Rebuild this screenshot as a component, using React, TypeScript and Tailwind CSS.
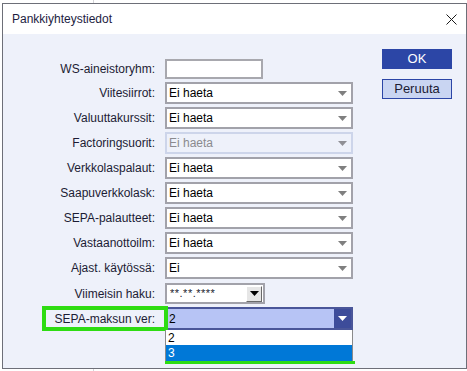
// pankkiyhteystiedot dialog
const font = { fontFamily: '"Liberation Sans", Arial, sans-serif' };

function Arrow({ color = "#7f7f7f" }: { color?: string }) {
  return (
    <svg width="9" height="5" viewBox="0 0 9 5">
      <polygon points="0,0 9,0 4.5,5" fill={color} />
    </svg>
  );
}

function Label({ text }: { text: string }) {
  return <div className="w-[152px] shrink-0 text-right text-[12px] text-[#1c1c34] leading-none">{text}</div>;
}

function Select({ value, disabled = false }: { value: string; disabled?: boolean }) {
  return (
    <div
      className={`${
        disabled ? "border-[#cdd5ea] bg-[#eef1fa] text-[#8a8a8e]" : "border-[#a2a2aa] bg-white text-black"
      } ml-[10px] w-[188px] h-[22px] border-2 flex items-center justify-between pl-[2px] pr-[4px] text-[12px]`}
    >
      <span>{value}</span>
      <Arrow color={disabled ? "#8f8f95" : "#7f7f7f"} />
    </div>
  );
}

function Row({ label, children, className = "" }: { label: string; children: React.ReactNode; className?: string }) {
  return (
    <div className={`flex items-center relative ${className}`}>
      <Label text={label} />
      {children}
    </div>
  );
}

export default function App() {
  const rows = [
    { label: "Viitesiirrot:", value: "Ei haeta" },
    { label: "Valuuttakurssit:", value: "Ei haeta" },
    { label: "Factoringsuorit:", value: "Ei haeta", disabled: true },
    { label: "Verkkolaspalaut:", value: "Ei haeta" },
    { label: "Saapuverkkolask:", value: "Ei haeta" },
    { label: "SEPA-palautteet:", value: "Ei haeta" },
    { label: "Vastaanottoilm:", value: "Ei haeta" },
    { label: "Ajast. käytössä:", value: "Ei" },
  ];

  return (
    <div className="w-[467px] h-[371px] bg-white relative overflow-hidden" style={font}>
      {/*--- background app line ---*/}
      <div className="absolute left-[93px] top-0 w-[1px] h-full bg-[#d4d4d8]" />
      {/*--- window ---*/}
      <div className="absolute left-[2px] top-[3px] w-[465px] h-[366px] border border-[#6d6f78] bg-[#eef1fa] flex flex-col">
        {/*--- title bar ---*/}
        <div className="h-[30px] bg-white flex items-center justify-between pl-[9px] pr-[9px] shrink-0">
          <span className="text-[12px] text-[#1d1d3f]">Pankkiyhteystiedot</span>
          <svg width="11" height="11" viewBox="0 0 11 11" className="mr-[0px]">
            <path d="M0.5 0.5 L10.5 10.5 M10.5 0.5 L0.5 10.5" stroke="#1a1a1a" strokeWidth="1" />
          </svg>
        </div>
        {/*--- body ---*/}
        <div className="flex">
          {/*--- form ---*/}
          <div className="w-[350px] flex flex-col pt-[25px]">
            <Row label="WS-aineistoryhm:">
              <div className="ml-[10px] w-[98px] h-[20px] border-2 border-[#a8a8ae] bg-white" />
            </Row>
            <div className="flex flex-col gap-[3px] mt-[3px]">
              {rows.map((r) => (
                <Row key={r.label} label={r.label}>
                  <Select value={r.value} disabled={r.disabled} />
                </Row>
              ))}
            </div>
            <Row label="Viimeisin haku:" className="mt-[4px]">
              <div className="ml-[10px] w-[100px] h-[21px] border-2 border-[#a2a2aa] bg-white flex items-center justify-between pl-[3px] pr-[1px]">
                <span className="text-[11px] text-[#1a1a2e] tracking-[0.5px] leading-none">**.**.****</span>
                <div className="w-[16px] h-[16px] bg-[#e6e6e6] border border-t-white border-l-white border-r-[#6a6a6a] border-b-[#6a6a6a] flex items-center justify-center">
                  <Arrow color="#000000" />
                </div>
              </div>
            </Row>
            <Row label="SEPA-maksun ver:" className="mt-[3px]">
              <div className="ml-[10px] w-[188px] h-[23px] border-2 border-[#4a5699] bg-[#b7c4f5] flex items-center justify-between pl-[2px] pr-[0px] text-[12px] text-black">
                <span>2</span>
                <div className="w-[17px] h-[19px] bg-[#3d4c9a] flex items-center justify-center">
                  <Arrow color="#ffffff" />
                </div>
              </div>
              {/*--- highlight around label ---*/}
              <div className="absolute left-[39px] top-[-1px] w-[126px] h-[25px] border-4 border-[#2edc12]" />
              {/*--- open list ---*/}
              <div className="absolute left-[162px] top-[23px] w-[188px] flex flex-col border-x border-[#8a8a8a] text-[12px] z-[1]">
                <div className="h-[15px] bg-white pl-[2px] flex items-center text-black">2</div>
                <div className="h-[16px] bg-[#0078d7] pl-[2px] flex items-center text-white">3</div>
                <div className="h-[3px] w-[190px] -ml-[1px] bg-[#2edc12]" />
              </div>
            </Row>
          </div>
          {/*--- buttons ---*/}
          <div className="ml-[29px] pt-[15px] flex flex-col gap-[10px]">
            <div className="w-[70px] h-[20px] bg-[#2c46a6] text-white text-[13px] flex items-center justify-center">OK</div>
            <div className="w-[70px] h-[20px] bg-[#c9d5f2] border border-[#2c46a6] text-[#1c1c34] text-[13px] flex items-center justify-center">Peruuta</div>
          </div>
        </div>
      </div>
    </div>
  );
}
